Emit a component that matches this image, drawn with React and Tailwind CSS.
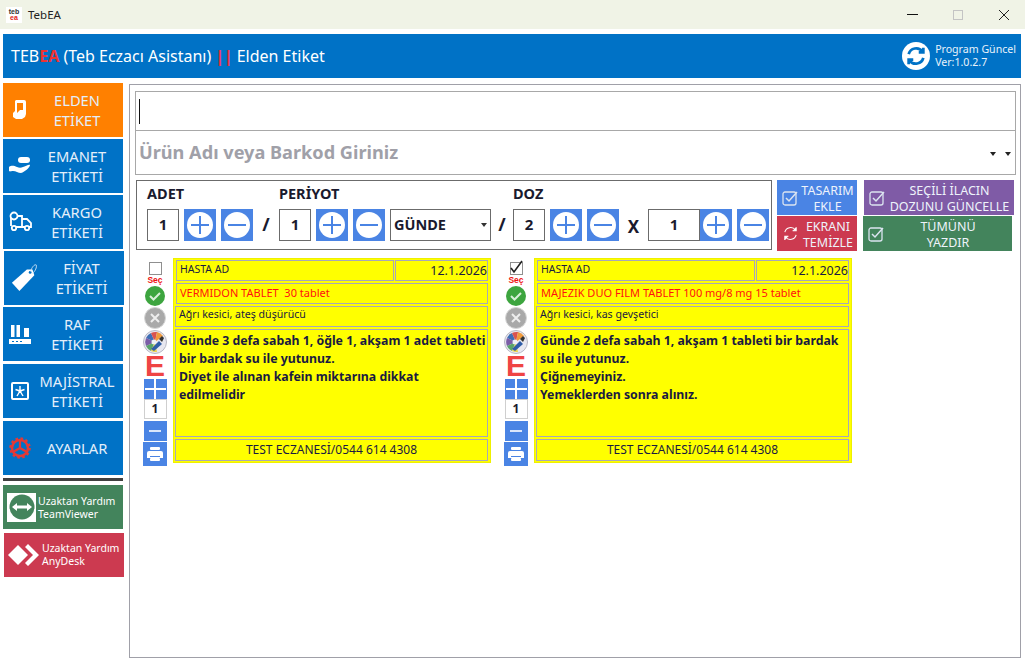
import React from 'react'

// small icons drawn to match the picture
const HandPhone = () => (
  <svg width="16" height="22" viewBox="0 0 16 22" fill="none">
    <path d="M4 1h8a2 2 0 0 1 2 2v12l-1 3-3 2H4l-3-2v-4l2-2V2z" fill="#fff" />
    <path d="M5 4h6v7H8l-3 3z" fill="#ff8000" />
  </svg>
)

const HandPill = () => (
  <svg width="24" height="20" viewBox="0 0 24 20" fill="#fff">
    <rect x="10" y="1" width="12" height="6" rx="3" />
    <path d="M1 11c3-2 5-1 8 0 2 1 4 1 6 0 2 0 6-3 7-2 0 2-5 7-9 8-3 0-5-2-8-2-2 0-3 1-4 0z" />
  </svg>
)

const Truck = () => (
  <svg width="24" height="22" viewBox="0 0 24 22" fill="none" stroke="#fff" strokeWidth="1.800">
    <path d="M3 15V5h11v11H8" />
    <path d="M14 8h5l4 4v4h-2M14 16h3" />
    <circle cx="6" cy="17" r="2.200" />
    <circle cx="19" cy="17" r="2.200" />
    <circle cx="6" cy="5" r="3.500" fill="#0072c6" />
  </svg>
)

const Tag = () => (
  <svg width="30" height="32" viewBox="0 0 30 32" fill="none">
    <path d="M1 21 17 7l6 0 2 6L9 30z" fill="#fff" />
    <circle cx="20.500" cy="10" r="1.500" fill="#0072c6" />
    <path d="M21 9c1-4 4-8 6-7 1 2-1 7-4 9" stroke="#cfe3f5" strokeWidth="1" />
  </svg>
)

const Shelf = () => (
  <svg width="22" height="19" viewBox="0 0 22 19" fill="#fff">
    <rect x="2" y="0" width="3.500" height="12" />
    <rect x="7.500" y="0" width="3.500" height="12" />
    <rect x="15" y="3" width="5" height="9" />
    <path d="M0 14h22v5H0z" />
    <path d="M3 16h2v1H3zM7 16h2v1H7zM11 16h2v1h-2z" fill="#0072c6" />
  </svg>
)

const Majistral = () => (
  <svg width="18" height="18" viewBox="0 0 18 18" fill="none" stroke="#fff">
    <rect x="1" y="1" width="16" height="16" rx="1" strokeWidth="2" />
    <path d="M9 9V4M9 9 4.500 7.500M9 9l4.500-1.500M9 9l-3 5M9 9l3 5" strokeWidth="1.400" />
    <circle cx="9" cy="9" r="1.500" fill="#fff" stroke="none" />
  </svg>
)

const Gear = () => (
  <svg width="22" height="22" viewBox="0 0 22 22" fill="none" stroke="#e53935">
    <circle cx="11" cy="11" r="8" strokeWidth="2.500" />
    <circle cx="11" cy="11" r="9.500" strokeWidth="2.500" strokeDasharray="2.500 2.500" />
    <path d="M11 11V3M11 11l-7 4M11 11l7 4" strokeWidth="2.200" />
  </svg>
)

const TeamViewerIcon = () => (
  <span className="flex w-[29px] h-[29px] bg-white items-center justify-center shrink-0">
    <svg width="26" height="26" viewBox="0 0 26 26">
      <circle cx="13" cy="13" r="12.500" fill="#43845c" />
      <path d="M3 13l5-4v2.500h10V9l5 4-5 4v-2.500H8V17z" fill="#fff" />
    </svg>
  </span>
)

const AnyDeskIcon = () => (
  <svg width="32" height="26" viewBox="0 0 32 26" fill="#fff" className="shrink-0">
    <path d="M11 3l10 10-10 10L1 13z" />
    <path d="M21 2l11 11-11 11-3-3 8-8-8-8z" />
  </svg>
)

const PlusMinus = ({ minus }) => (
  <button className="w-8 h-8 bg-[#4a84e4] flex items-center justify-center shrink-0">
    <svg width="26" height="26" viewBox="0 0 26 26">
      <circle cx="13" cy="13" r="13" fill="#fff" />
      {!minus && <path d="M13 4v18" stroke="#4a84e4" strokeWidth="2" />}
      <path d="M4 13h18" stroke="#4a84e4" strokeWidth="2" />
    </svg>
  </button>
)

const CheckIcon = ({ size = 16 }) => (
  <svg width={size} height={size} viewBox="0 0 16 16" fill="none" className="shrink-0">
    <rect x="1" y="2" width="13" height="13" rx="2" stroke="#dbe4f0" strokeWidth="1.300" />
    <path d="M4 8l3 3 8-9" stroke="#dbe4f0" strokeWidth="1.500" />
  </svg>
)

const Refresh = ({ size, color, width = 2 }) => (
  <svg width={size} height={size} viewBox="0 0 24 24" fill="none" stroke={color} strokeWidth={width} className="shrink-0">
    <path d="M4 10a8.500 8.500 0 0 1 15-3" />
    <path d="M20 3v5h-5" fill={color} />
    <path d="M20 14a8.500 8.500 0 0 1-15 3" />
    <path d="M4 21v-5h5" fill={color} />
  </svg>
)

const NumBox = ({ value, className = 'w-8' }) => (
  <div className={`${className} h-[32px] border border-[#6b6b6b] bg-white flex items-center justify-center text-[15px] font-bold text-[#1a1a2e] shrink-0`}>
    {value}
  </div>
)

const menu = [
  { top: 'ELDEN', bottom: 'ETİKET', icon: <HandPhone />, bg: 'bg-[#ff8000]', cls: 'mt-0' },
  { top: 'EMANET', bottom: 'ETİKETİ', icon: <HandPill />, bg: 'bg-[#0072c6]', cls: 'mt-[2px]' },
  { top: 'KARGO', bottom: 'ETİKETİ', icon: <Truck />, bg: 'bg-[#0072c6]', cls: 'mt-[2px]' },
  { top: 'FİYAT', bottom: 'ETİKETİ', icon: <Tag />, bg: 'bg-[#0072c6]', cls: 'mt-[2px] ml-px -mr-px pl-1' },
  { top: 'RAF', bottom: 'ETİKETİ', icon: <Shelf />, bg: 'bg-[#0072c6]', cls: 'mt-[2px]' },
  { top: 'MAJİSTRAL', bottom: 'ETİKETİ', icon: <Majistral />, bg: 'bg-[#0072c6]', cls: 'mt-[3px]' },
  { top: 'AYARLAR', icon: <Gear />, bg: 'bg-[#0072c6]', cls: 'mt-[3px]' },
]

const labels = [
  {
    checked: false,
    drug: 'VERMIDON TABLET  30 tablet',
    use: 'Ağrı kesici, ateş düşürücü',
    lines: ['Günde 3 defa sabah 1, öğle 1, akşam 1 adet tableti', 'bir bardak su ile yutunuz.', 'Diyet ile alınan kafein miktarına dikkat', 'edilmelidir'],
  },
  {
    checked: true,
    drug: 'MAJEZIK DUO FILM TABLET 100 mg/8 mg 15 tablet',
    use: 'Ağrı kesici, kas gevşetici',
    lines: ['Günde 2 defa sabah 1, akşam 1 tableti bir bardak', 'su ile yutunuz.', 'Çiğnemeyiniz.', 'Yemeklerden sonra alınız.'],
  },
]

const Palette = () => (
  <svg width="24" height="24" viewBox="0 0 24 24">
    <circle cx="12" cy="12" r="11.500" fill="#e8e8f0" stroke="#b8b8c4" />
    <path d="M12 12 3 8a10 10 0 0 1 5-5z" fill="#3f6fb5" />
    <path d="M12 12 8 3a10 10 0 0 1 6-1z" fill="#d9534f" />
    <path d="M12 12l2-10a10 10 0 0 1 6 4z" fill="#ef9a3c" />
    <path d="M12 12 3 8a10 10 0 0 0 0 8z" fill="#7b5ea7" />
    <path d="M12 12l-9 4a10 10 0 0 0 5 5z" fill="#5aa469" />
    <path d="M12 12l-4 9a10 10 0 0 0 6 1z" fill="#e9d44c" />
    <circle cx="11" cy="12" r="2.500" fill="#eef0f6" />
    <path d="M8 19l8-8 3 3-8 7z" fill="#2f5da8" />
    <path d="M16 9l3-3 2 2-2 4z" fill="#333" />
  </svg>
)

const LabelCard = ({ item }) => (
  <div className="flex w-[349px]">
    {/* side tools */}
    <div className="w-[24px] ml-[1px] flex flex-col items-center shrink-0">
      <div className="w-[13px] h-[13px] mt-[3px] border border-[#8f8f8f] bg-white flex items-center justify-center relative">
        {item.checked && (
          <svg width="16" height="16" viewBox="0 0 16 16" fill="none" className="absolute -top-[3px] -right-[2px]">
            <path d="M3 8l3 4 8-11" stroke="#222" strokeWidth="1.600" />
          </svg>
        )}
      </div>
      <div className="text-[8.500px] leading-[9px] mt-[1px] font-bold text-[#ee1111] font-['Liberation_Sans',sans-serif]">Seç</div>
      <svg width="20" height="20" viewBox="0 0 20 20" className="mt-[1px] shrink-0">
        <circle cx="10" cy="10" r="10" fill="#3da53f" />
        <path d="M5 10l3.500 3.500L15 7" stroke="#d8efd8" strokeWidth="2" fill="none" />
      </svg>
      <svg width="22" height="22" viewBox="0 0 22 22" className="mt-[1px] shrink-0">
        <circle cx="11" cy="11" r="10.500" fill="#a9a9a9" stroke="#d6d6d6" />
        <path d="M7 7l8 8M15 7l-8 8" stroke="#eee" strokeWidth="2" />
      </svg>
      <div className="mt-px h-[24px]"><Palette /></div>
      <div className="text-[30px] leading-[24px] h-[24px] font-bold text-[#ef4444] font-['Liberation_Sans',sans-serif]">E</div>
      <div className="w-[23px] h-[20px] mt-[1px] bg-[#4a84e4] relative flex items-center justify-center">
        <div className="absolute w-[21px] h-[2px] bg-white" />
        <div className="absolute w-[2px] h-[20px] bg-white" />
      </div>
      <div className="w-[23px] h-[20px] bg-white border border-[#cfcfcf] flex items-center justify-center text-[12px] font-bold text-[#1a1a2e]">1</div>
      <div className="w-[23px] h-[20px] mt-[2px] bg-[#4a84e4] flex items-center justify-center">
        <div className="w-[12px] h-[2px] bg-[#dbe6fa]" />
      </div>
      <div className="w-[24px] h-[24px] mt-px bg-[#4a84e4] flex items-center justify-center">
        <svg width="16" height="14" viewBox="0 0 16 14" fill="#fff">
          <rect x="3" y="0" width="10" height="3" rx="1" />
          <path d="M0 6a2 2 0 0 1 2-2h12a2 2 0 0 1 2 2v5H0z" />
          <rect x="3" y="9" width="10" height="1" fill="#4a84e4" />
          <rect x="3" y="11" width="10" height="3" rx="1" />
        </svg>
      </div>
    </div>

    {/* yellow label */}
    <div className="ml-[6px] -mt-px w-[318px] h-[205px] bg-[#ffff00] pt-[1px] px-[2px] text-[#1a1a40] flex flex-col gap-[2px] border border-[#eef000]">
      <div className="flex h-[21px] gap-px">
        <div className="w-[218px] border border-[#a8a8b8] text-[10.500px] leading-[16px] pl-[3px]">HASTA AD</div>
        <div className="flex-1 border border-[#a8a8b8] text-[12.500px] leading-[20px] text-right">12.1.2026</div>
      </div>
      <div className="h-[21px] border border-[#a8a8b8] text-[11px] leading-[17px] pl-[3px] text-[#ff1010] whitespace-pre">{item.drug}</div>
      <div className="h-[21px] border border-[#a8a8b8] text-[10.600px] leading-[15px] pl-[3px] -ml-px">{item.use}</div>
      <div className="h-[108px] border border-[#a8a8b8] text-[12.300px] leading-[18px] font-bold pl-[3px] pt-[2px] -ml-px whitespace-nowrap">
        {item.lines.map((l) => (
          <div key={l}>{l}</div>
        ))}
      </div>
      <div className="h-[22px] border border-[#a8a8b8] text-[12px] leading-[19px] text-center -ml-px">TEST ECZANESİ/0544 614 4308</div>
    </div>
  </div>
)

const ActionBtn = ({ bg, icon, top, bottom, w }) => (
  <button className={`${bg} ${w} h-[35px] flex items-center text-[#eef3fb] text-[12.500px] leading-[16px] pl-[5px]`}>
    <span>{icon}</span>
    <span className="flex-1 text-center whitespace-nowrap pt-[2px]">
      {top}
      <br />
      {bottom}
    </span>
  </button>
)

export default function App() {
  return (
    <div className="w-[1025px] h-[662px] bg-white overflow-hidden flex flex-col font-['Noto_Sans','Open_Sans',sans-serif] text-[#1a1a2e]">
      {/* title bar */}
      <div className="h-[29px] bg-[#f0f3e6] flex items-center shrink-0">
        <div className="ml-[6px] w-[16px] h-[16px] bg-white flex flex-col items-center justify-center text-[7px] leading-[6px] font-bold font-['Liberation_Sans',sans-serif]">
          <span className="text-[#333]">teb</span>
          <span className="text-[#e02020]">ea</span>
        </div>
        <span className="ml-[6px] text-[11.500px] text-[#222]">TebEA</span>
        <div className="ml-auto flex items-center">
          <div className="w-[11px] h-px bg-[#111] mr-[35px]" />
          <div className="w-[10px] h-[10px] border border-[#c4c4c4] mr-[35px]" />
          <svg width="12" height="12" viewBox="0 0 12 12" className="mr-[15px]">
            <path d="M1 1l10 10M11 1 1 11" stroke="#222" strokeWidth="1" />
          </svg>
        </div>
      </div>

      {/* blue header */}
      <div className="mt-[5px] mx-[3px] mr-[4px] h-[44px] bg-[#0072c6] flex items-center text-white shrink-0 pl-[8px]">
        <span className="text-[16px] whitespace-pre">
          TEB<b className="text-[#ee3333]">EA</b> (Teb Eczacı Asistanı) <b className="text-[#ee3344] font-extrabold">||</b> Elden Etiket
        </span>
        <div className="ml-auto flex items-center pr-[5px]">
          <span className="w-[28px] h-[28px] rounded-full bg-white flex items-center justify-center">
            <Refresh size={22} color="#0072c6" width={3} />
          </span>
          <span className="ml-[5px] text-[10.600px] leading-[13px] text-[#e8f2fb]">
            Program Güncel
            <br />
            Ver:1.0.2.7
          </span>
        </div>
      </div>

      <div className="flex flex-1 mt-[5px] pb-[4px] min-h-0">
        {/* sidebar */}
        <div className="w-[120px] ml-[3px] flex flex-col shrink-0">
          {menu.map((m) => (
            <button key={m.top} className={`${m.bg} ${m.cls} h-[54px] flex items-center text-[#e4effa] text-[14.700px] leading-[20px] shrink-0`}>
              <span className="w-[31px] flex justify-center shrink-0 pl-[3px]">{m.icon}</span>
              <span className="w-[86px] text-center whitespace-nowrap">
                {m.top}
                {m.bottom && <br />}
                {m.bottom}
              </span>
            </button>
          ))}
          <div className="h-[3px] bg-[#404040] mt-[3px] shrink-0" />
          <button className="mt-[4px] h-[44px] bg-[#43845c] flex items-center pl-[4px] text-white text-[10.500px] leading-[13px] text-left shrink-0">
            <TeamViewerIcon />
            <span className="ml-[2px] whitespace-nowrap pt-[1px]">
              Uzaktan Yardım
              <br />
              TeamViewer
            </span>
          </button>
          <button className="mt-[4px] ml-px -mr-px h-[44px] bg-[#cc3a50] flex items-center pl-[3px] text-white text-[10.500px] leading-[13px] text-left shrink-0">
            <AnyDeskIcon />
            <span className="ml-[3px] whitespace-nowrap">
              Uzaktan Yardım
              <br />
              AnyDesk
            </span>
          </button>
        </div>

        {/* main panel */}
        <div className="ml-[6px] mr-[4px] mt-px flex-1 border border-[#a0a0a8] px-[5px] pt-[6px] min-w-0">
          <div className="w-[881px] border border-[#a8a8a8]">
            <div className="h-[39px] border-b border-[#a8a8a8] flex items-center pl-[3px]">
              <div className="w-px h-[25px] bg-[#111]" />
            </div>
            <div className="h-[43px] flex items-center pl-[3px] relative">
              <span className="text-[18.150px] font-bold text-[#a0a0a8]">Ürün Adı veya Barkod Giriniz</span>
              <span className="ml-auto flex gap-[9px] pr-[4px] pt-[2px]">
                <i className="w-0 h-0 border-x-[3px] border-x-transparent border-t-[4px] border-t-[#222]" />
                <i className="w-0 h-0 border-x-[3px] border-x-transparent border-t-[4px] border-t-[#222]" />
              </span>
            </div>
          </div>

          {/* dose toolbar */}
          <div className="flex mt-[5px] ml-px">
            <div className="w-[636px] h-[70px] border border-[#6b6b6b] pl-[10px] shrink-0">
              <div className="flex h-[27px] items-center text-[14.500px] font-bold text-[#1a1a2e] pb-[2px]">
                <span className="w-[132px]">ADET</span>
                <span className="w-[234px]">PERİYOT</span>
                <span>DOZ</span>
              </div>
              <div className="flex items-center h-[33px]">
                <NumBox value="1" />
                <span className="ml-[5px]"><PlusMinus /></span>
                <span className="ml-[5px]"><PlusMinus minus /></span>
                <span className="w-[26px] text-center text-[18px] font-bold shrink-0">/</span>
                <NumBox value="1" />
                <span className="ml-[5px]"><PlusMinus /></span>
                <span className="ml-[5px]"><PlusMinus minus /></span>
                <div className="ml-[5px] w-[101px] h-[32px] border border-[#6b6b6b] flex items-center pl-[3px] text-[14.500px] font-bold shrink-0">
                  GÜNDE
                  <i className="ml-auto mr-[3px] w-0 h-0 border-x-[3px] border-x-transparent border-t-[4px] border-t-[#333]" />
                </div>
                <span className="w-[22px] text-center text-[18px] font-bold shrink-0">/</span>
                <NumBox value="2" />
                <span className="ml-[5px]"><PlusMinus /></span>
                <span className="ml-[5px]"><PlusMinus minus /></span>
                <span className="w-[29px] text-center text-[17px] font-bold pt-[4px] shrink-0">X</span>
                <NumBox value="1" className="w-[52px]" />
                <PlusMinus />
                <span className="ml-[5px]"><PlusMinus minus /></span>
              </div>
            </div>
            <div className="ml-[5px] flex flex-col gap-px w-[80px] shrink-0">
              <ActionBtn bg="bg-[#4a84e4]" w="w-[80px]" icon={<CheckIcon />} top="TASARIM" bottom="EKLE" />
              <ActionBtn bg="bg-[#cc3a50]" w="w-[80px]" icon={<Refresh size={17} color="#fff" width={1.500} />} top="EKRANI" bottom="TEMİZLE" />
            </div>
            <div className="ml-[6px] flex flex-col gap-px w-[151px] shrink-0">
              <ActionBtn bg="bg-[#7f5ba6]" w="ml-px w-[150px]" icon={<CheckIcon />} top="SEÇİLİ İLACIN" bottom="DOZUNU GÜNCELLE" />
              <ActionBtn bg="bg-[#43845c]" w="w-[149px]" icon={<CheckIcon />} top="TÜMÜNÜ" bottom="YAZDIR" />
            </div>
          </div>

          {/* printed labels */}
          <div className="flex mt-[8px] gap-[12px] ml-[7px]">
            {labels.map((item) => (
              <LabelCard key={item.drug} item={item} />
            ))}
          </div>
        </div>
      </div>
    </div>
  )
}
